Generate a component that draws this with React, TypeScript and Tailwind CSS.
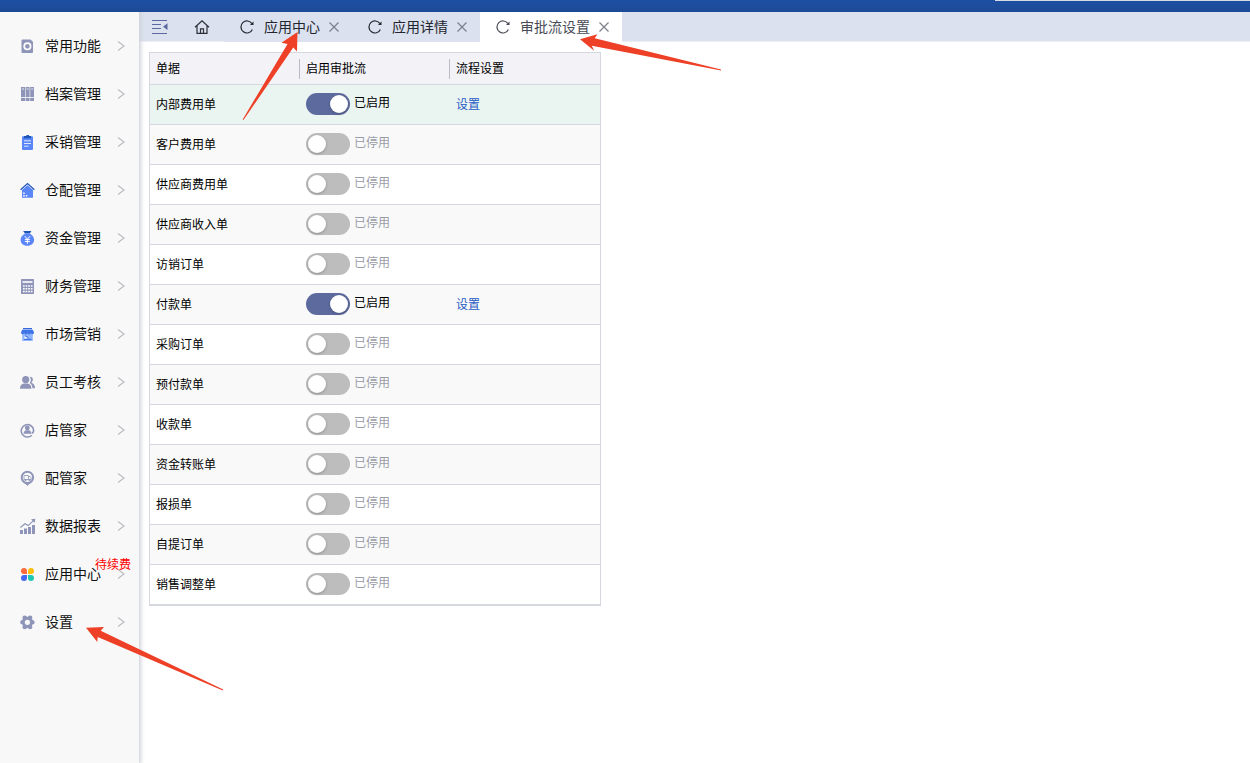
import { useState, type ReactNode } from "react";

const GREY = "#8e95b8";
const BLUE = "#5b86f7";
const NAVY = "#1d56b8";

type MenuEntry = { label: string; icon: ReactNode; badge?: string };

const menu: MenuEntry[] = [
  {
    label: "常用功能",
    icon: (
      <>
        <path d="M2.5 1.5h8l2.5 2.2V14a1 1 0 0 1-1 1H2.5a1 1 0 0 1-1-1V2.5a1 1 0 0 1 1-1z" fill={GREY} />
        <circle cx="7.4" cy="8.3" r="3.2" fill="none" stroke="#fff" strokeWidth="1.7" />
      </>
    ),
  },
  {
    label: "档案管理",
    icon: (
      <>
        <path d="M1 1h4v14H1zM5.6 1h4v14h-4zM10.2 1H14v14h-3.8z" fill={GREY} />
        <path d="M2 3h2M6.6 3h2M11.2 3h2M1 11.5h13" stroke="#fff" strokeWidth="0.8" />
      </>
    ),
  },
  {
    label: "采销管理",
    icon: (
      <>
        <rect x="2" y="2.3" width="11" height="13.7" rx="1" fill={BLUE} />
        <path d="M4 2h2l.8-1h1.800l.8 1H11v2.300H4z" fill={NAVY} />
        <path d="M4 6.8h7M4 9.5h7M4 12.2h4.500" stroke="#dbe6ff" strokeWidth="1" />
      </>
    ),
  },
  {
    label: "仓配管理",
    icon: (
      <>
        <path d="M7.5 3.2 13 8v7.700H2V8z" fill={BLUE} />
        <path d="M.6 7.8 7.5 1.600l6.900 6.200" fill="none" stroke={NAVY} strokeWidth="1.2" />
        <path d="M3.2 10.5h1.500V12H3.200zM3.200 13h1.500v1.500H3.200zM5.800 13h1.500v1.500H5.800z" fill="#fff" />
      </>
    ),
  },
  {
    label: "资金管理",
    icon: (
      <>
        <path d="M3.2 1h8.200l-1.500 2.500h-5z" fill={NAVY} />
        <path d="M5.2 3.5h4.400c2.800 1.500 4.500 3.600 4.500 6.300 0 3.800-2.900 6-6.800 6s-6.700-2.200-6.700-6c0-2.700 1.700-4.800 4.600-6.300z" fill={BLUE} />
        <path d="m4.8 6.200 2.600 3 2.600-3M4.900 9.600h5M4.900 11.500h5M7.400 9.200v4.600" fill="none" stroke="#fff" strokeWidth="1" />
      </>
    ),
  },
  {
    label: "财务管理",
    icon: (
      <>
        <rect x="1" y="1" width="13" height="15" rx="0.5" fill={GREY} />
        <path d="M2.5 3.200h10v1.600h-10z" fill="#fff" />
        <path d="M3 8h9.500M3 10.800h9.500M3 13.500h9.500" stroke="#fff" strokeWidth="1.4" strokeDasharray="1.7 0.9" />
      </>
    ),
  },
  {
    label: "市场营销",
    icon: (
      <>
        <path d="M2.2 8h10.600v7H2.200z" fill="#8fb6ff" />
        <path d="M3 2h9v1.300H3z" fill="#3567dc" />
        <path d="M2.2 3.800h10.600L14 6.500c0 2-2.200 2.300-3.200 1-.9 1.200-2.400 1.200-3.300 0-.9 1.200-2.400 1.200-3.300 0-1 1.300-3.200 1-3.200-1z" fill="#3f74e8" />
        <path d="M4.5 9.800 8 11.800l-3.500 1.600z" fill="#fff" />
        <path d="m5 9.800 3.500 2M4 13.300h7.500" fill="none" stroke="#3567dc" strokeWidth="1" />
      </>
    ),
  },
  {
    label: "员工考核",
    icon: (
      <>
        <circle cx="5.7" cy="5.6" r="3.6" fill={GREY} />
        <path d="M0 14.800c0-3.200 1.500-4.800 4-5.200h3.400c2.500.4 4 2 4 5.200z" fill={GREY} />
        <path d="M9.8 2.700c3.200-.2 4.300 3.500 1.600 6 2.400.7 3.600 2.600 3.600 5.600h-2.600c-.1-2.500-.9-4.100-2.700-5.200 1.500-2 1.500-4.300.1-6.400z" fill={GREY} />
      </>
    ),
  },
  {
    label: "店管家",
    icon: (
      <>
        <path d="M11.8 13.200A6.200 6.200 0 1 1 13.600 8c0 2.200-.6 3.200-1.900 3.200" fill="none" stroke={GREY} strokeWidth="1.6" />
        <circle cx="7.3" cy="6" r="2.4" fill={GREY} />
        <path d="M3.6 11.800c0-2.300 1.300-3.600 2.700-3.600h2.300c1.500 0 2.800 1.300 2.800 3.600z" fill={GREY} />
      </>
    ),
  },
  {
    label: "配管家",
    icon: (
      <>
        <circle cx="7.4" cy="7.4" r="5.7" fill="none" stroke={GREY} strokeWidth="2" />
        <path d="M4.7 13h5.400l-2.700 3z" fill={GREY} />
        <path d="M4 5.500h4.500v3.800M8.500 6.500h1.700l.9 1.300v1.700H4V5.500" fill="none" stroke={GREY} strokeWidth="0.8" />
        <circle cx="5.6" cy="10" r="1.1" fill={GREY} />
        <circle cx="9.5" cy="10" r="1.1" fill={GREY} />
      </>
    ),
  },
  {
    label: "数据报表",
    icon: (
      <>
        <path d="M0 12h3v4H0zM4 10.500h3V16H4zM8 9h3v7H8zM12 7h3v9h-3z" fill={GREY} />
        <path d="M.3 9.500 5 5.800l3.200 1.800 5.500-5.200" fill="none" stroke={GREY} strokeWidth="1.2" />
        <path d="M11 1.300 15.300.8l-.6 4.200z" fill={GREY} />
      </>
    ),
  },
  {
    label: "应用中心",
    badge: "待续费",
    icon: (
      <>
        <path d="M4 2a3 3 0 0 1 3 3v3H4a3 3 0 0 1 0-6z" fill="#ff6a3a" />
        <path d="M11 2a3 3 0 0 1 0 6H8V5a3 3 0 0 1 3-3z" fill="#ffbf0f" />
        <path d="M4 9h3v3a3 3 0 1 1-3-3z" fill="#4468f2" />
        <path d="M8 9h3a3 3 0 1 1-3 3z" fill="#1fc8b0" />
      </>
    ),
  },
  {
    label: "设置",
    icon: (
      <>
        <g fill={GREY}>
          <circle cx="7.4" cy="8.3" r="5.6" />
          <circle cx="4.7" cy="3.7" r="2.3" />
          <circle cx="10.1" cy="3.7" r="2.3" />
          <circle cx="2.5" cy="8.3" r="2.3" />
          <circle cx="12.3" cy="8.3" r="2.3" />
          <circle cx="4.7" cy="12.9" r="2.3" />
          <circle cx="10.1" cy="12.9" r="2.3" />
        </g>
        <circle cx="7.4" cy="8.3" r="2.6" fill="#f8f8f8" />
      </>
    ),
  },
];

const tabs = ["应用中心", "应用详情", "审批流设置"];

const documents = [
  "内部费用单",
  "客户费用单",
  "供应商费用单",
  "供应商收入单",
  "访销订单",
  "付款单",
  "采购订单",
  "预付款单",
  "收款单",
  "资金转账单",
  "报损单",
  "自提订单",
  "销售调整单",
];

function Sidebar() {
  return (
    <nav className="z-10 w-[139px] shrink-0 bg-[#f8f8f8] pt-[10px] shadow-[1px_0_4px_1px_#cfd2da]">
      <ul>
        {menu.map((m) => (
          <li key={m.label} className="relative">
            <a href="#" className="flex h-12 items-center pr-[14px] pl-5 text-sm text-[#111]">
              <svg viewBox="0 0 16 16" className="size-4 shrink-0" aria-hidden="true">
                {m.icon}
              </svg>
              <span className="ml-[9px] flex-1 pb-[2px] whitespace-nowrap">{m.label}</span>
              <svg viewBox="0 0 8 12" className="h-3 w-2 shrink-0" fill="none" stroke="#bbbdc4" strokeWidth="1.2" aria-hidden="true">
                <path d="m1 1.500 6 4.500-6 4.500" />
              </svg>
            </a>
            {m.badge && (
              <span className="absolute top-[6px] right-2 text-xs text-[#ff0000]">{m.badge}</span>
            )}
          </li>
        ))}
      </ul>
    </nav>
  );
}

function TabBar() {
  const [active, setActive] = useState(2);
  return (
    <div className="flex h-[30px] border-b border-[#eceef4] bg-[#dbe1ee] text-sm">
      <button type="button" aria-label="收起菜单" className="ml-3 flex w-[18px] items-center">
        <svg viewBox="0 0 18 16" className="h-4 w-[18px]" fill="none" stroke="#5b69a0" strokeWidth="1">
          <path d="M1 1.500h15M1 5.500h9M1 9.500h9M1 14.500h15" />
          <path d="m16.500 4.300v6.800L12 7.700z" fill="#5b69a0" stroke="none" />
        </svg>
      </button>
      <button type="button" aria-label="首页" className="mr-[14px] ml-[25px] flex w-4 items-center">
        <svg viewBox="0 0 16 16" className="size-4" fill="none" stroke="#2d3038" strokeWidth="1.2">
          <path d="M1 8.300 8 1.800l7 6.500M3 7v7.400h10V7" />
          <path d="M6.500 14.400V9.800h3v4.600" />
        </svg>
      </button>
      {tabs.map((t, i) => (
        <div
          key={t}
          className={
            i === active
              ? "flex h-[30px] items-center bg-white pr-[13px] pl-4 text-[#484b55]"
              : "flex h-[30px] items-center bg-[#dbe1ee] pr-[13px] pl-4 text-[#23262e]"
          }
        >
          <button type="button" aria-label="刷新" className="size-[14px]">
            <svg viewBox="0 0 14 14" className="size-[14px]" fill="none" stroke="currentColor" strokeWidth="1.2">
              <path d="M12.400 9.500A6 6 0 1 1 12 3.700" />
              <path d="M13.500 1.500v3.500H10z" fill="currentColor" stroke="none" />
            </svg>
          </button>
          <button type="button" onClick={() => setActive(i)} className="mr-[9px] ml-[10px] pb-[2px] whitespace-nowrap">
            {t}
          </button>
          <button type="button" aria-label="关闭" className="size-[10px]">
            <svg viewBox="0 0 10 10" className="size-[10px]" fill="none" stroke="#7c808a" strokeWidth="1.2">
              <path d="m.5.5 9 9M9.5.5l-9 9" />
            </svg>
          </button>
        </div>
      ))}
    </div>
  );
}

function ApprovalTable() {
  const [enabled, setEnabled] = useState<string[]>(["内部费用单", "付款单"]);
  const toggle = (name: string) =>
    setEnabled((list) => (list.includes(name) ? list.filter((n) => n !== name) : [...list, name]));

  return (
    <table className="w-[452px] table-fixed border-separate border-spacing-0 border border-[#d6d8e0] text-left text-xs text-black">
      <thead>
        <tr className="h-8 bg-[#f2f2f7]">
          {["单据", "启用审批流", "流程设置"].map((h, i) => (
            <th key={h} scope="col" className="border-b border-[#d6d8e0] p-0 font-normal">
              <div
                className={
                  i < 2
                    ? "flex h-5 items-center border-r border-[#b9bbc8] pb-[2px] pl-[6px]"
                    : "flex h-5 items-center pb-[2px] pl-[6px]"
                }
              >
                {h}
              </div>
            </th>
          ))}
        </tr>
      </thead>
      <tbody>
        {documents.map((name, i) => {
          const on = enabled.includes(name);
          return (
            <tr
              key={name}
              className={i === 0 ? "h-10 bg-[#eaf4f1]" : i % 2 ? "h-10 bg-[#f9f9f9]" : "h-10 bg-white"}
            >
              <td className="border-b border-[#d6d8e0] p-0 pb-[2px] pl-[6px]">{name}</td>
              <td className="border-b border-[#d6d8e0] p-0 pb-[2px] pl-[6px]">
                <label className="flex h-[22px] items-start gap-1">
                  <input
                    type="checkbox"
                    role="switch"
                    aria-label={name}
                    checked={on}
                    onChange={() => toggle(name)}
                    className="h-[22px] w-11 shrink-0 appearance-none rounded-full bg-[#bdbdbd] p-[2px] before:block before:size-[18px] before:rounded-full before:bg-white before:shadow-[0_1px_3px_rgba(0,0,0,0.25)] checked:bg-[#5d6a9e] checked:before:ml-[22px]"
                  />
                  <span className={on ? "leading-[18px] text-black" : "leading-[18px] text-[#9a9da8]"}>
                    {on ? "已启用" : "已停用"}
                  </span>
                </label>
              </td>
              <td className="border-b border-[#d6d8e0] p-0 pb-[2px] pl-[6px]">
                {on && (
                  <a href="#" className="text-[#1f5bc4]">
                    设置
                  </a>
                )}
              </td>
            </tr>
          );
        })}
      </tbody>
    </table>
  );
}

function Arrows() {
  return (
    <svg
      viewBox="0 0 760 700"
      className="pointer-events-none absolute top-0 left-0 z-30 h-[700px] w-[760px]"
      fill="#ee4027"
      aria-hidden="true"
    >
      <path d="M297.500 32 281.500 42.700l6 1.300L242.700 119.500l.8.500L293.300 47.500l3.700 4z" />
      <path d="M580 39.300 597.500 34.200l-2.800 4L721 69.500v1L591.800 45.800l2.400 5z" />
      <path d="M86 627.700 104 627l-3.300 3.700L223.200 689.500l-.4 1L97.700 637l-.4 5z" />
    </svg>
  );
}

export default function App() {
  return (
    <div className="relative flex min-h-screen flex-col bg-white font-['Noto_Sans_CJK_SC',sans-serif]">
      <header className="z-20 flex h-3 justify-end bg-linear-to-b from-[#1d4fa3] to-[#1c4a94]">
        <div className="h-px w-[255px] bg-[#d5dbe3]" />
      </header>
      <div className="flex flex-1">
        <Sidebar />
        <main className="min-w-0 flex-1">
          <TabBar />
          <div className="p-[10px]">
            <ApprovalTable />
          </div>
        </main>
      </div>
      <Arrows />
    </div>
  );
}
